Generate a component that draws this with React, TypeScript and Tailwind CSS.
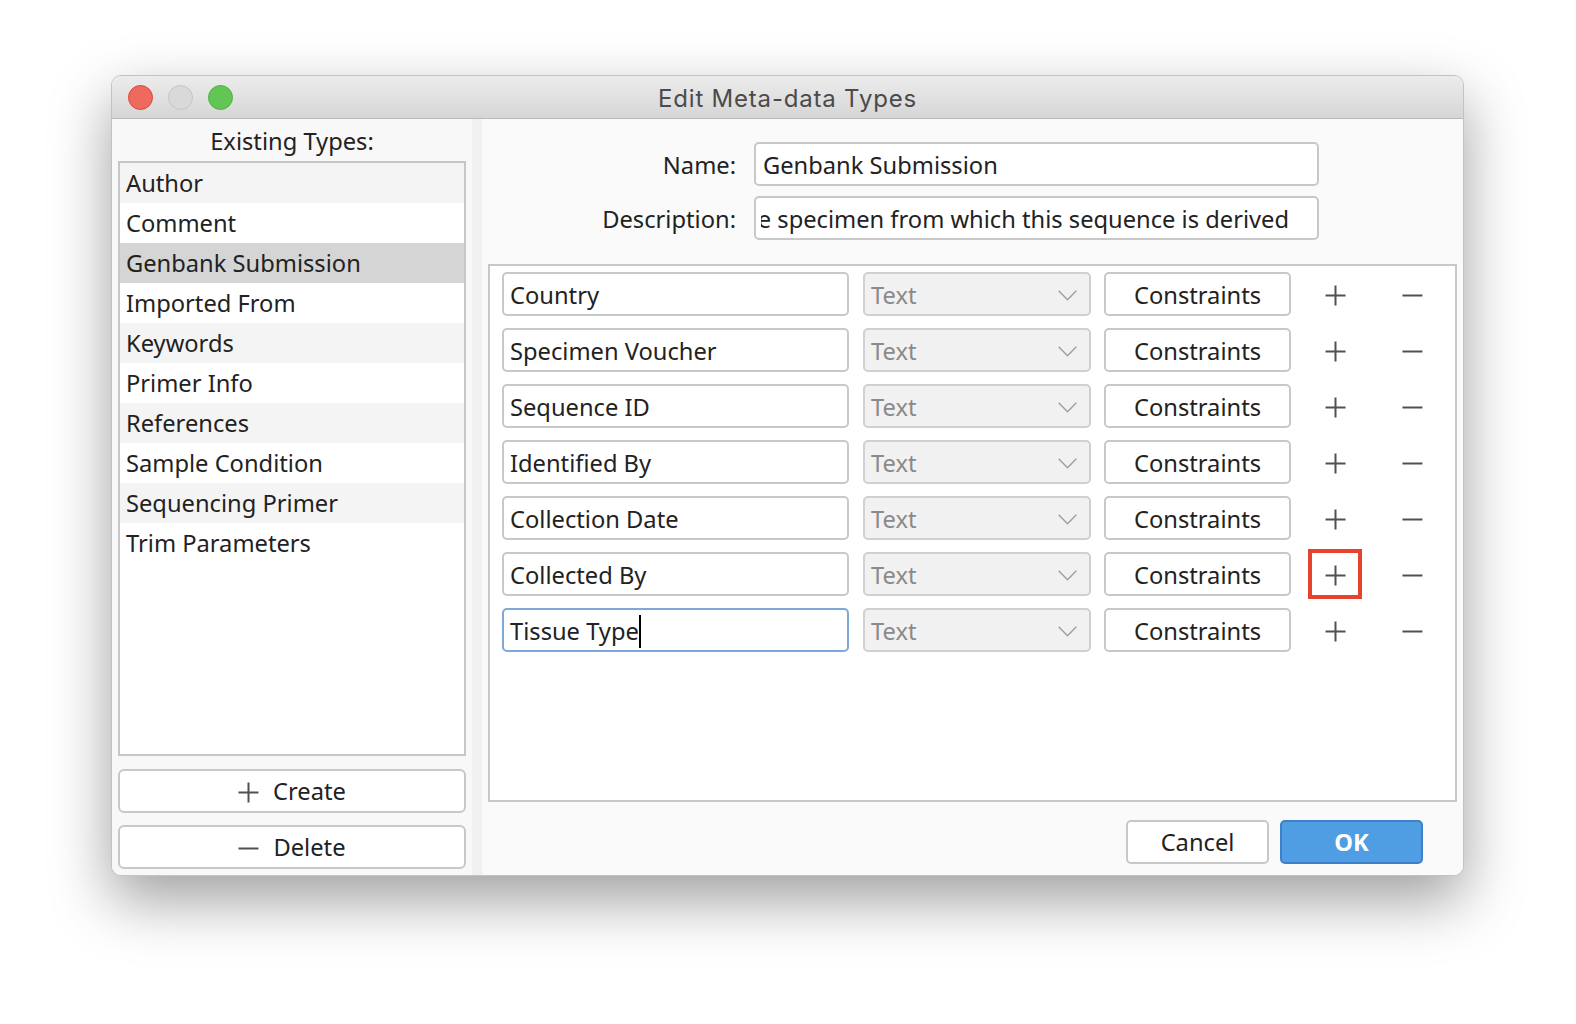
import React from "react";

const font = { fontFamily: '"Noto Sans", "Open Sans", sans-serif' };

function PlusIcon() {
  return (
    <svg width="21" height="21" viewBox="0 0 21 21" className="text-[#505050]">
      <path d="M10.5 0.5 V20.5 M0.5 10.5 H20.5" stroke="currentColor" strokeWidth="2" fill="none" />
    </svg>
  );
}

function MinusIcon() {
  return (
    <svg width="21" height="21" viewBox="0 0 21 21" className="text-[#505050]">
      <path d="M0.5 10.5 H20.5" stroke="currentColor" strokeWidth="2" fill="none" />
    </svg>
  );
}

function Chevron() {
  return (
    <svg width="19" height="11" viewBox="0 0 19 11">
      <path d="M0.7 0.8 L9.5 9.8 L18.3 0.8" stroke="#a0a0a0" strokeWidth="1.5" fill="none" />
    </svg>
  );
}

const types = [
  "Author",
  "Comment",
  "Genbank Submission",
  "Imported From",
  "Keywords",
  "Primer Info",
  "References",
  "Sample Condition",
  "Sequencing Primer",
  "Trim Parameters",
];

const fields = [
  "Country",
  "Specimen Voucher",
  "Sequence ID",
  "Identified By",
  "Collection Date",
  "Collected By",
  "Tissue Type",
];

export default function App() {
  return (
    <div className="h-[1024px] w-full overflow-hidden bg-white pt-[75px] pl-[111px] text-[23.7px]" style={font}>
      <div className="flex h-[801px] w-[1353px] flex-col overflow-hidden rounded-[10px] border border-[#c2c2c2] bg-[#f8f8f8] shadow-[0_24px_60px_rgba(0,0,0,0.38)]">
        {/* Title bar */}
        <div className="relative flex h-[43px] shrink-0 items-center border-b border-[#bababa] bg-gradient-to-b from-[#ececec] to-[#d6d6d6]">
          <div className="flex items-center gap-[15px] pl-[16px] pt-[1px]">
            <div className="h-[25px] w-[25px] rounded-full border border-[#e0443e] bg-[#ee6a5f]" />
            <div className="h-[25px] w-[25px] rounded-full border border-[#c4c4c4] bg-[#d9d9d9]" />
            <div className="h-[25px] w-[25px] rounded-full border border-[#4fb043] bg-[#62c655]" />
          </div>
          <div
            className="absolute inset-0 flex items-center justify-center pt-[3px] text-[24px] tracking-[0.8px] text-[#4b4b4b]"
            style={{ fontFamily: 'Inter, "Liberation Sans", Arial, sans-serif' }}
          >
            Edit Meta-data Types
          </div>
        </div>

        {/* Body */}
        <div className="flex min-h-0 flex-1">
          {/* Left panel */}
          <div className="flex w-[360px] shrink-0 flex-col bg-[#f8f8f8] px-[6px]">
            <div className="flex h-[41.5px] items-center justify-center pt-[5px] text-[#222]">
              Existing Types:
            </div>
            <div className="h-[595px] border-2 border-[#c6c6c6] bg-white">
              {types.map((t, i) => (
                <div
                  key={t}
                  className={`flex h-[40px] items-center pl-[6px] pt-[3px] text-[#222] ${
                    i === 2 ? "bg-[#d5d5d5]" : i % 2 === 0 ? "bg-[#f4f4f4]" : "bg-white"
                  }`}
                >
                  {t}
                </div>
              ))}
            </div>
            <div className="mt-[13px] flex h-[44px] items-center justify-center gap-[14px] rounded-[6px] border-2 border-[#c8c8c8] bg-white pt-[3px] text-[#222]">
              <PlusIcon />
              <span>Create</span>
            </div>
            <div className="mt-[12px] flex h-[44px] items-center justify-center gap-[14px] rounded-[6px] border-2 border-[#c8c8c8] bg-white pt-[3px] text-[#222]">
              <MinusIcon />
              <span>Delete</span>
            </div>
          </div>

          {/* Divider */}
          <div className="w-[10px] shrink-0 bg-[#f0f0f0]" />

          {/* Right panel */}
          <div className="flex min-w-0 flex-1 flex-col bg-[#fafafa] px-[6px]">
            <div className="mt-[23px] flex h-[44px] items-center">
              <div className="w-[248px] pt-[4px] text-right text-[#222]">Name:</div>
              <div className="ml-[18px] flex h-[44px] w-[565px] items-center rounded-[5px] border-2 border-[#c8c8c8] bg-white px-[7px] pt-[3px] text-[#222]">
                Genbank Submission
              </div>
            </div>
            <div className="mt-[10px] flex h-[44px] items-center">
              <div className="w-[248px] pt-[4px] text-right text-[#222]">Description:</div>
              <div className="ml-[18px] flex h-[44px] w-[565px] items-center overflow-hidden rounded-[5px] border-2 border-[#c8c8c8] bg-white px-[5px] pt-[3px] text-[#222]">
                <div className="flex w-full min-w-0 justify-end overflow-hidden whitespace-nowrap pr-[23px]">
                  <span className="shrink-0">Describes the specimen from which this sequence is derived</span>
                </div>
              </div>
            </div>

            {/* Table */}
            <div className="mt-[23.5px] flex h-[538px] flex-col gap-[12px] border-2 border-[#c8c8c8] bg-white pl-[12px] pt-[6.5px]">
              {fields.map((f, i) => (
                <div key={f} className="flex h-[44px] items-center">
                  <div
                    className={`flex h-[44px] w-[347px] items-center rounded-[5px] bg-white px-[6px] pt-[3px] text-[#222] ${
                      i === 6 ? "border-2 border-[#7ea8da]" : "border-2 border-[#c8c8c8]"
                    }`}
                  >
                    <span>{f}</span>
                    {i === 6 && <span className="inline-block h-[33px] w-[2px] bg-black" />}
                  </div>
                  <div className="ml-[14px] flex h-[44px] w-[228px] items-center justify-between rounded-[5px] border-2 border-[#d0d0d0] bg-[#f1f1f1] pl-[6px] pr-[12px] pt-[3px] text-[#8a8a8a]">
                    <span>Text</span>
                    <Chevron />
                  </div>
                  <div className="ml-[13px] flex h-[44px] w-[187px] items-center justify-center rounded-[5px] border-2 border-[#c8c8c8] bg-white pt-[3px] text-[#222]">
                    Constraints
                  </div>
                  <div
                    className={`ml-[17px] flex h-[50px] w-[54px] shrink-0 items-center justify-center pt-[2px] ${
                      i === 5 ? "border-[4px] border-[#e5432e]" : ""
                    }`}
                  >
                    <PlusIcon />
                  </div>
                  <div className="ml-[23px] flex h-[50px] w-[54px] shrink-0 items-center justify-center pt-[2px]">
                    <MinusIcon />
                  </div>
                </div>
              ))}
            </div>

            {/* Buttons */}
            <div className="mt-[18px] flex justify-end gap-[11px] pr-[34px]">
              <div className="flex h-[44px] w-[143px] items-center justify-center rounded-[5px] border-2 border-[#c8c8c8] bg-white pt-[3px] text-[#222]">
                Cancel
              </div>
              <div className="flex h-[44px] w-[143px] items-center justify-center rounded-[5px] border-2 border-[#3d7fc8] bg-[#4f9de2] pt-[3px] font-bold text-white">
                OK
              </div>
            </div>
          </div>
        </div>
      </div>
    </div>
  );
}
